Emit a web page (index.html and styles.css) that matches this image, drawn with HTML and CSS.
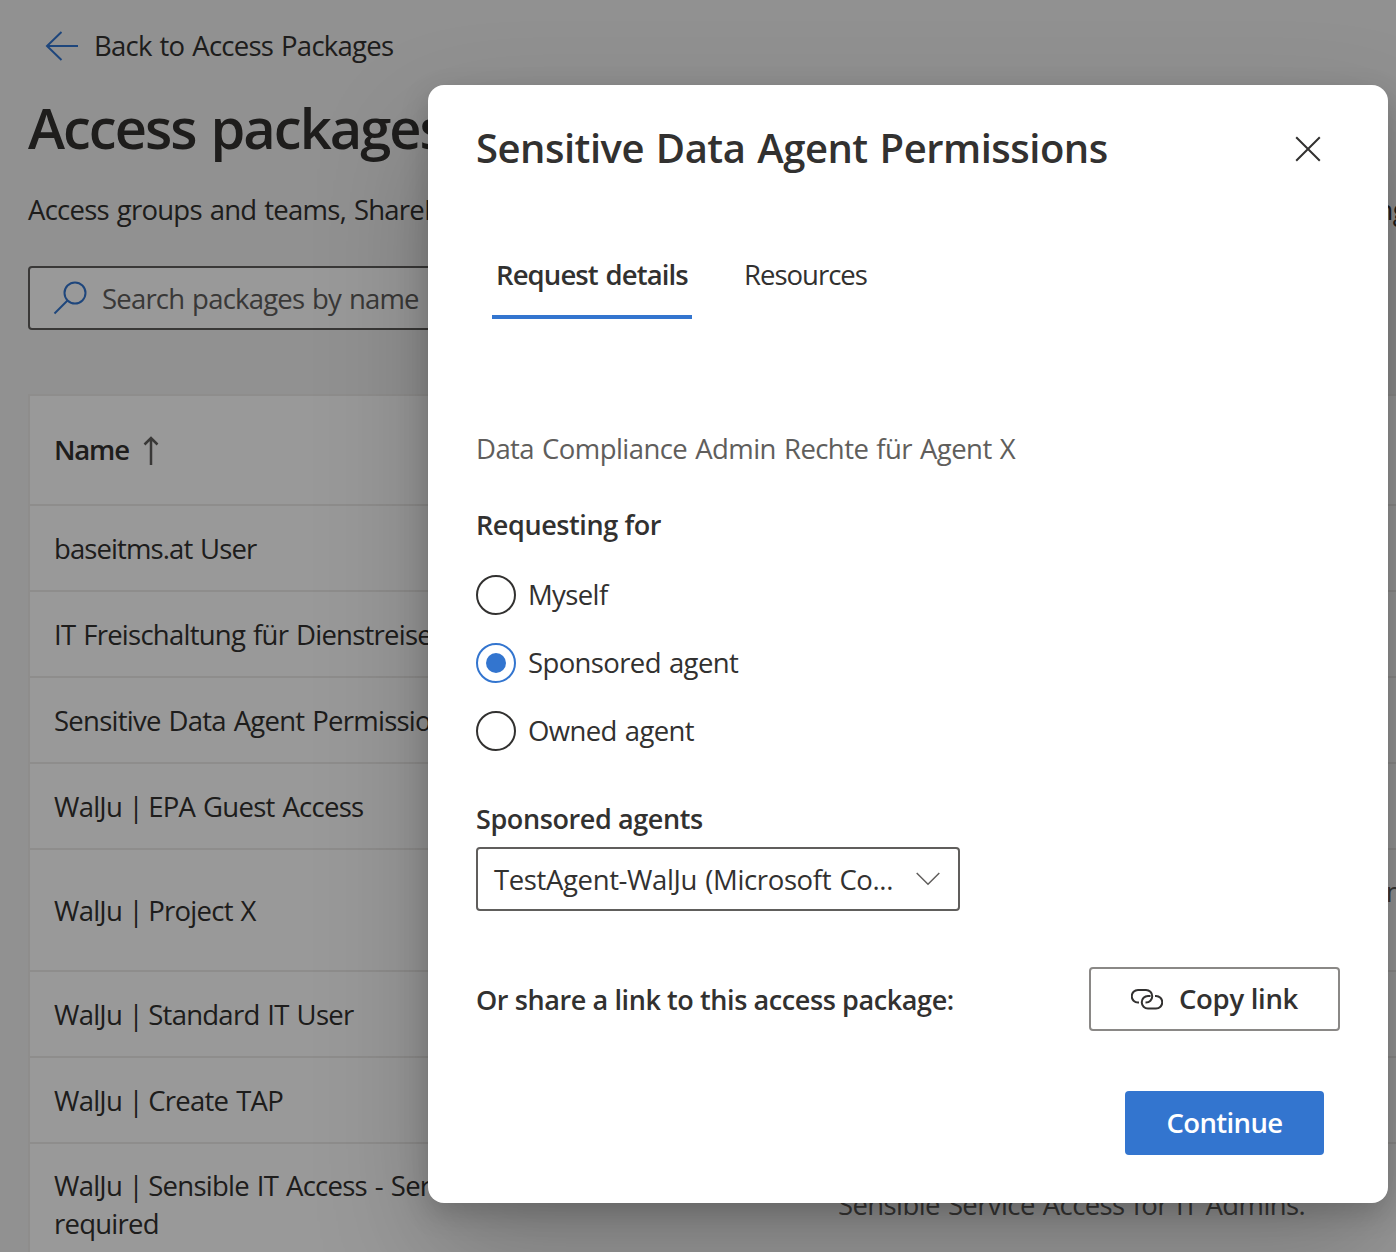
FILE: index.html
```html
<!DOCTYPE html>
<html lang="en">
<head>
    <meta charset="UTF-8">
    <meta name="viewport" content="width=device-width, initial-scale=1.0">
    <title>Access packages</title>
    <link rel="stylesheet" href="styles.css">
</head>
<body>
    <main class="page">
        <a class="back-link">
            <svg class="back-icon" width="34" height="32" viewBox="0 0 34 32"><path d="M33 16H2M16.500 2L2 16l14.500 14"/></svg>
            <span class="back-text">Back to Access Packages</span>
        </a>
        <h1 class="page-title">Access packages</h1>
        <p class="page-intro"><span>Access groups and teams, SharePoint sites, applications, and more in a</span><span>single package.</span></p>
        <div class="search-box">
            <svg class="search-icon" width="34" height="34" viewBox="0 0 34 34"><circle cx="22" cy="12" r="10.500"/><path d="M14.500 19.500L1.500 32.500"/></svg>
            <span class="search-text">Search packages by name</span>
        </div>
        <div class="table">
            <div class="row header">
                <div class="cell name">Name
                    <svg class="sort-icon" width="16" height="30" viewBox="0 0 16 30"><path d="M8 29V2M1.500 8.500L8 2l6.500 6.500"/></svg>
                </div>
            </div>
            <div class="row"><div class="cell name short">baseitms.at User</div></div>
            <div class="row"><div class="cell name">IT Freischaltung für Dienstreisen</div></div>
            <div class="row"><div class="cell name">Sensitive Data Agent Permissions</div></div>
            <div class="row"><div class="cell name">WalJu <span class="pipe">|</span> EPA Guest Access</div></div>
            <div class="row">
                <div class="cell name">WalJu <span class="pipe">|</span> Project X</div>
                <div class="cell description">
                    <div class="description-line"><span>Access to the resources of project X for</span><span>members</span></div>
                    <div>of the team.</div>
                </div>
            </div>
            <div class="row"><div class="cell name">WalJu <span class="pipe">|</span> Standard IT User</div></div>
            <div class="row"><div class="cell name">WalJu <span class="pipe">|</span> Create TAP</div></div>
            <div class="row">
                <div class="cell name">WalJu <span class="pipe">|</span> Sensible IT Access - Service required</div>
                <div class="cell description">Sensible Service Access for IT Admins.</div>
            </div>
        </div>
    </main>

    <div class="overlay">
        <div class="dialog">
            <div class="dialog-header">
                <h2 class="dialog-title">Sensitive Data Agent Permissions</h2>
                <svg class="close-icon" width="26" height="26" viewBox="0 0 26 26"><path d="M1.200 1.200L24.800 24.800M24.800 1.200L1.200 24.800"/></svg>
            </div>
            <div class="tabs">
                <div class="tab active">Request details</div>
                <div class="tab">Resources</div>
            </div>
            <p class="package-info">Data Compliance Admin Rechte für Agent X</p>
            <h3 class="label requesting">Requesting for</h3>
            <div class="radio-group">
                <div class="radio"><span class="circle"></span><span>Myself</span></div>
                <div class="radio checked"><span class="circle"></span><span>Sponsored agent</span></div>
                <div class="radio"><span class="circle"></span><span>Owned agent</span></div>
            </div>
            <h3 class="label agents">Sponsored agents</h3>
            <div class="dropdown">
                <span class="dropdown-text">TestAgent-WalJu (Microsoft Co...</span>
                <svg class="chevron" width="24" height="14" viewBox="0 0 24 14"><path d="M.7 1L12 12.300 23.300 1"/></svg>
            </div>
            <div class="share">
                <h3 class="label share-text">Or share a link to this access package:</h3>
                <button class="copy-btn">
                    <svg class="link-icon" width="32" height="21" viewBox="0 0 32 21"><path d="M8 13.500H7A6.250 6.250 0 0 1 7 1h8a6.250 6.250 0 0 1 0 12.500h-.5M24 7h1a6.250 6.250 0 0 1 0 12.500h-8A6.250 6.250 0 0 1 17 7h2.500"/></svg>
                    <span>Copy link</span>
                </button>
            </div>
            <button class="continue-btn">Continue</button>
        </div>
    </div>
</body>
</html>
```

FILE: styles.css
```css
* {
    box-sizing: border-box;
}

body {
    margin: 0;
    height: 1252px;
    overflow: hidden;
    position: relative;
    background-color: #f2f2f2;
    color: #323130;
    font-family: "Open Sans", "Noto Sans", sans-serif;
    font-size: 27.5px;
    line-height: 38px;
    letter-spacing: -0.75px;
    word-spacing: 1.5px;
}

h1, h2, h3, p {
    margin: 0;
    font-weight: 600;
}

svg {
    fill: none;
    stroke: #323130;
    stroke-width: 2;
    flex: none;
}

/* page behind the dialog */
.page {
    padding: 27px 0 0 28px;
    overflow: hidden;
}

.back-link {
    display: flex;
    align-items: center;
    gap: 15px;
    padding-left: 17px;
}

.back-icon,
.search-icon {
    stroke: #3375cf;
}

.page-title {
    margin-top: 26px;
    font-size: 56px;
    line-height: 72px;
    letter-spacing: -2px;
    word-spacing: 2.5px;
}

.page-intro {
    display: grid;
    grid-template-columns: 1330px 300px;
    margin-top: 28px;
    font-weight: 400;
    white-space: nowrap;
}

.search-box {
    display: flex;
    align-items: center;
    gap: 15px;
    width: 720px;
    height: 64px;
    margin-top: 37px;
    padding-left: 23px;
    border: 2px solid #605e5c;
    border-radius: 4px;
    background-color: #fff;
    color: #605e5c;
}

.search-text {
    padding-top: 2px;
    letter-spacing: -0.8px;
}

.table {
    margin-top: 64px;
    border: 2px solid #edebe9;
    border-right: none;
    background-color: #fff;
}

.row {
    display: grid;
    grid-template-columns: 784px 600px;
    align-items: center;
    min-height: 86px;
    padding: 23px 0 21px;
    border-bottom: 2px solid #edebe9;
}

.row.header {
    min-height: 110px;
    padding: 22px 0;
    font-weight: 600;
}

.cell {
    padding: 0 24px;
}

.row .name {
    padding-right: 280px;
}

.row .short {
    letter-spacing: -0.9px;
}

.header .name {
    display: flex;
    align-items: center;
    gap: 14px;
    letter-spacing: -1.2px;
}

.pipe {
    margin: 0 -2.5px 0 -1.5px;
}

.sort-icon {
    margin-top: 2px;
    stroke: #605e5c;
    stroke-width: 2.5;
}

.description {
    color: #605e5c;
    letter-spacing: -0.6px;
}

.description-line {
    display: grid;
    grid-template-columns: 508px 140px;
}

/* dialog */
.overlay {
    position: absolute;
    inset: 0;
    padding: 85px 0 0 428px;
    background-color: rgba(0, 0, 0, 0.4);
}

.dialog {
    width: 960px;
    height: 1118px;
    padding: 36px 48px;
    border-radius: 16px;
    background-color: #fff;
    box-shadow: 0 51px 115px rgba(0, 0, 0, 0.22), 0 10px 29px rgba(0, 0, 0, 0.18);
}

.dialog-header {
    display: flex;
    justify-content: space-between;
    align-items: center;
    padding-right: 19px;
}

.dialog-title {
    padding-bottom: 2px;
    font-size: 40px;
    line-height: 54px;
    letter-spacing: -0.5px;
    word-spacing: 2px;
}

.tabs {
    display: flex;
    gap: 48px;
    margin: 56px 0 0 16px;
}

.tab {
    height: 86px;
    padding: 23px 4px 0;
    letter-spacing: -1px;
}

.tab.active {
    width: 200px;
    padding-right: 0;
    border-bottom: 4px solid #3375cf;
    font-weight: 600;
    letter-spacing: -0.9px;
    white-space: nowrap;
}

.package-info {
    margin-top: 111px;
    color: #605e5c;
    font-weight: 400;
    letter-spacing: -0.57px;
}

.label {
    font-size: 27px;
    letter-spacing: -0.4px;
    word-spacing: 0;
}

.requesting {
    margin-top: 38px;
}

.radio-group {
    display: flex;
    flex-direction: column;
    gap: 28px;
    margin-top: 31px;
}

.radio {
    display: flex;
    align-items: center;
    gap: 12px;
    height: 40px;
    letter-spacing: -0.62px;
}

.circle {
    width: 40px;
    height: 40px;
    border: 2px solid #323130;
    border-radius: 50%;
}

.checked .circle {
    border-color: #3375cf;
    padding: 8px;
    background: #3375cf content-box;
}

.agents {
    margin-top: 49px;
}

.dropdown {
    display: flex;
    align-items: center;
    justify-content: space-between;
    width: 484px;
    height: 64px;
    margin-top: 9px;
    padding: 0 18px 0 16px;
    border: 2px solid #605e5c;
    border-radius: 4px;
}

.dropdown-text {
    padding-top: 2px;
    letter-spacing: -0.37px;
    white-space: nowrap;
}

.chevron {
    stroke: #605e5c;
    stroke-width: 1.5;
}

.share {
    display: flex;
    align-items: center;
    justify-content: space-between;
    margin-top: 56px;
}

.share-text {
    padding-top: 2px;
}

button {
    display: flex;
    align-items: center;
    justify-content: center;
    height: 64px;
    border-radius: 4px;
    font: inherit;
    font-weight: 600;
    letter-spacing: -0.6px;
    white-space: nowrap;
}

.copy-btn {
    gap: 16px;
    width: 251px;
    border: 2px solid #8a8886;
    background-color: #fff;
    color: #323130;
    letter-spacing: -0.3px;
}

.continue-btn {
    width: 199px;
    margin: 60px 16px 0 auto;
    border: none;
    background-color: #3375cf;
    color: #fff;
}
```
